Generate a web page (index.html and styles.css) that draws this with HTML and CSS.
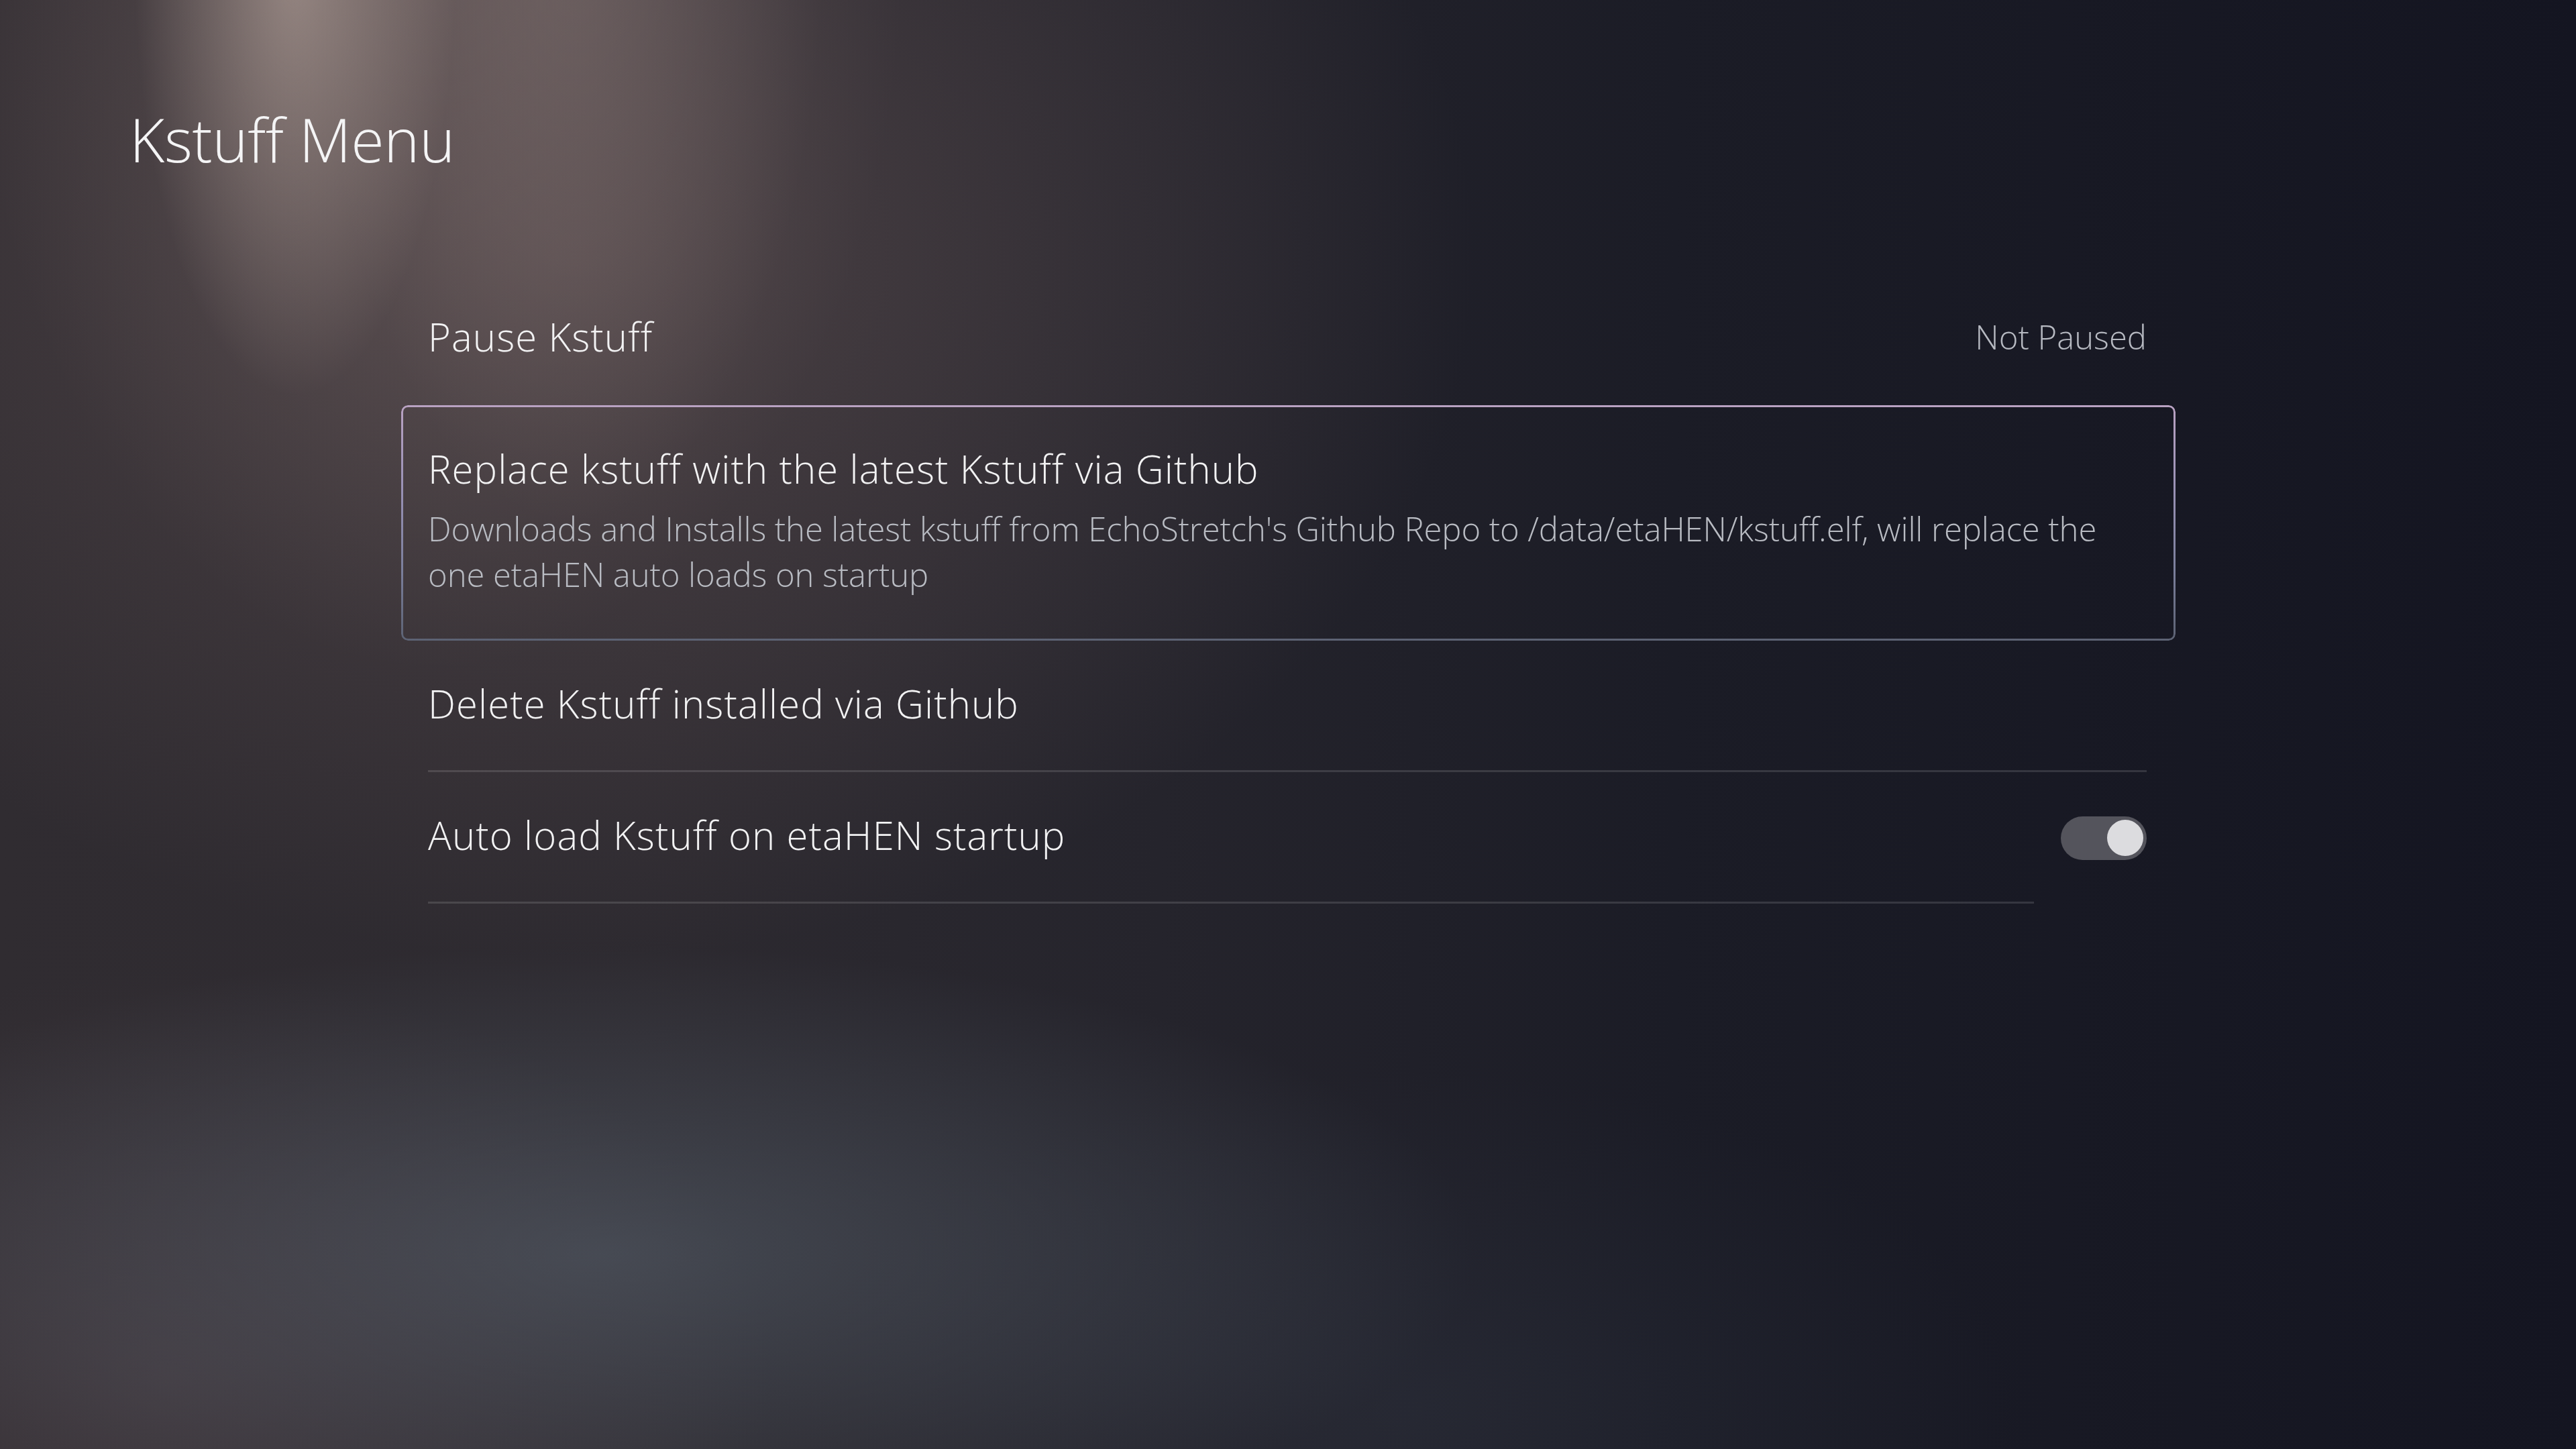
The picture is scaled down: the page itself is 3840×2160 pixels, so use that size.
FILE: index.html
```
<!DOCTYPE html>
<html lang="en">
<head>
<meta charset="utf-8">
<title>Kstuff Menu</title>
<link rel="stylesheet" href="styles.css">
</head>
<body>
<div class="screen">
  <header class="header">
    <h1 class="title">Kstuff Menu</h1>
  </header>
  <ul class="menu">
    <li class="item no-sep">
      <div class="item-main">
        <span class="label">Pause Kstuff</span>
        <span class="value">Not Paused</span>
      </div>
    </li>
    <li class="item focused">
      <div class="item-main">
        <div class="item-text">
          <span class="label">Replace kstuff with the latest Kstuff via Github</span>
          <p class="desc">Downloads and Installs the latest kstuff from EchoStretch's Github Repo to /data/etaHEN/kstuff.elf, will replace the one etaHEN auto loads on startup</p>
        </div>
      </div>
    </li>
    <li class="item">
      <div class="item-main">
        <span class="label">Delete Kstuff installed via Github</span>
      </div>
    </li>
    <li class="item">
      <div class="item-main">
        <span class="label">Auto load Kstuff on etaHEN startup</span>
      </div>
      <span class="toggle on"><span class="knob"></span></span>
    </li>
  </ul>
</div>
</body>
</html>
```
FILE: styles.css
```
html, body {
  margin: 0;
  padding: 0;
}
body {
  width: 3840px;
  height: 2160px;
  overflow: hidden;
  font-family: "Open Sans", "Noto Sans", sans-serif;
  font-weight: 300;
  color: #f2f2f3;
  background:
    radial-gradient(ellipse 240px 650px at 440px -60px, rgba(205,185,175,0.55), rgba(205,185,175,0) 100%),
    radial-gradient(ellipse 380px 900px at 850px -120px, rgba(170,150,145,0.28), rgba(170,150,145,0) 100%),
    radial-gradient(ellipse 700px 1100px at 650px -100px, rgba(160,140,135,0.30), rgba(160,140,135,0) 100%),
    radial-gradient(ellipse 1350px 1050px at 850px 380px, rgba(120,100,100,0.42), rgba(120,100,100,0) 100%),
    radial-gradient(ellipse 1300px 460px at 900px 1870px, rgba(88,98,110,0.55), rgba(88,98,110,0) 100%),
    radial-gradient(ellipse 900px 600px at 250px 2050px, rgba(85,72,78,0.45), rgba(85,72,78,0) 100%),
    radial-gradient(ellipse 900px 500px at 2100px 2100px, rgba(50,56,70,0.35), rgba(50,56,70,0) 100%),
    linear-gradient(90deg, #302c31 0%, #2d2a30 25%, #25242c 45%, #1b1c26 65%, #141521 100%);
}
.screen {
  width: 3840px;
  height: 2160px;
}
.header {
  padding: 153px 0 0 193px;
}
.title {
  margin: 0;
  font-size: 90px;
  line-height: 108px;
  font-weight: 300;
  letter-spacing: -0.3px;
  color: #f4f4f5;
}
.menu {
  list-style: none;
  margin: 147px 0 0 598px;
  padding: 0;
  width: 2645px;
}
.item {
  position: relative;
  display: flex;
  align-items: stretch;
  gap: 40px;
  padding: 0 43px 0 40px;
}
.item-main {
  flex: 1;
  display: flex;
  align-items: center;
  justify-content: space-between;
  padding: 54px 0 59px;
  border-bottom: 3px solid rgba(255,255,255,0.13);
}
.item.no-sep .item-main,
.item.focused .item-main {
  border-bottom-width: 0;
}
.item.no-sep .item-main {
  padding-bottom: 62px;
}
.label {
  display: block;
  font-size: 58px;
  line-height: 80px;
  letter-spacing: 1.1px;
  color: #f2f2f3;
}
.value {
  font-size: 49px;
  line-height: 80px;
  color: #b6b9c1;
}
.item.focused .item-main {
  padding: 55px 0 65px;
}
.item.focused::before {
  content: "";
  position: absolute;
  inset: 0;
  border-radius: 10px;
  padding: 3px;
  background: linear-gradient(180deg, #b9a2c2 0%, #9a92b6 35%, #7b7f9c 70%, #5c6273 100%);
  -webkit-mask: linear-gradient(#000 0 0) content-box, linear-gradient(#000 0 0);
  -webkit-mask-composite: xor;
  mask: linear-gradient(#000 0 0) content-box exclude, linear-gradient(#000 0 0);
  pointer-events: none;
}
.desc {
  margin: 15px 0 0;
  font-size: 49px;
  line-height: 68px;
  letter-spacing: -0.1px;
  color: #b9bcc3;
}
.toggle {
  align-self: center;
  width: 128px;
  height: 65px;
  border-radius: 33px;
  background: #54545c;
  display: flex;
  align-items: center;
  justify-content: flex-end;
  padding: 0 5px;
  box-sizing: border-box;
}
.knob {
  width: 54px;
  height: 54px;
  border-radius: 50%;
  background: #dcdcdf;
}
```
